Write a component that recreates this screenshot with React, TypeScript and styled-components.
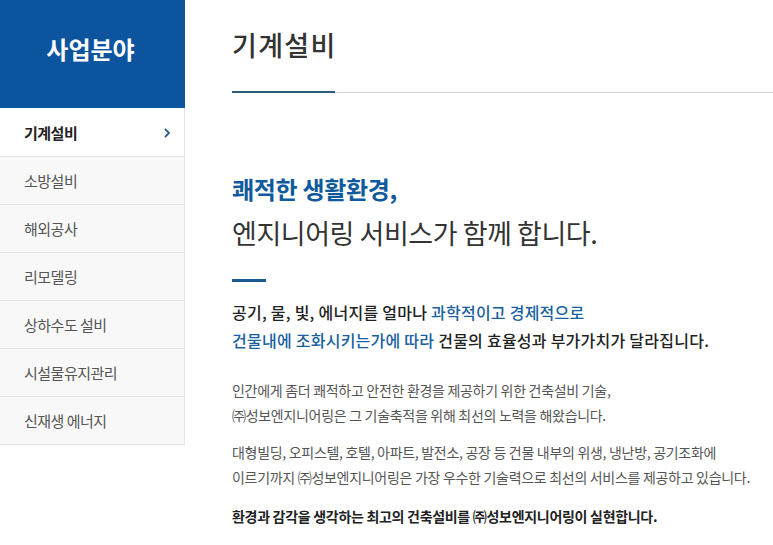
import React from "react";
import styled, { createGlobalStyle } from "styled-components";

const Global = createGlobalStyle`
  html, body { margin: 0; padding: 0; background: #fff; }
  body { font-family: "Noto Sans CJK KR", "Noto Sans", sans-serif; color: #333; }
  * { box-sizing: border-box; }
`;

const Page = styled.div`
  display: flex;
  width: 773px;
  height: 545px;
  overflow: hidden;
`;

const Sidebar = styled.aside`
  width: 185px;
  flex: none;
  display: flex;
  flex-direction: column;
`;

const SideHeader = styled.div`
  height: 108px;
  background: #0d549f;
  color: #fff;
  display: flex;
  align-items: center;
  justify-content: center;
  font-size: 24px;
  font-weight: 700;
  padding: 0 4px 12px 0;
`;

const Menu = styled.ul`
  list-style: none;
  margin: 0;
  padding: 1px 0 0;
  border-right: 1px solid #e6e6e6;
`;

const MenuItem = styled.li<{ $active?: boolean }>`
  height: 48px;
  display: flex;
  align-items: center;
  justify-content: space-between;
  padding: 0 12px 0 24px;
  background: ${(p) => (p.$active ? "#fff" : "#f8f8f8")};
  border-bottom: 1px solid #e4e4e4;
  font-size: 15px;
  letter-spacing: -0.5px;
  font-weight: ${(p) => (p.$active ? 700 : 400)};
  color: ${(p) => (p.$active ? "#222" : "#555")};
`;

const Chevron = styled.svg`
  width: 10px;
  height: 12px;
`;

const Main = styled.main`
  flex: 1;
  padding-left: 47px;
  display: flex;
  flex-direction: column;
`;

const Title = styled.h1`
  margin: 0;
  height: 91px;
  display: flex;
  align-items: center;
  padding-bottom: 2px;
  font-size: 27px;
  font-weight: 500;
  color: #333;
  letter-spacing: 1.3px;
`;

const Rule = styled.div`
  display: flex;
  align-items: flex-end;
  height: 2px;
`;

const RuleAccent = styled.div`
  width: 103px;
  height: 2px;
  background: #2b5a7c;
`;

const RuleRest = styled.div`
  flex: 1;
  height: 1px;
  background: #cfcfcf;
`;

const Headline = styled.h2`
  margin: 74px 0 0;
  font-weight: 400;
  line-height: 44px;
`;

const HeadStrong = styled.span`
  display: block;
  font-size: 24px;
  font-weight: 700;
  color: #0f5a9c;
  letter-spacing: -0.3px;
`;

const HeadLight = styled.span`
  display: block;
  font-size: 27px;
  font-weight: 400;
  color: #333;
  letter-spacing: -0.45px;
`;

const Bar = styled.div`
  width: 34px;
  height: 3px;
  background: #1c5c92;
  margin-top: 24px;
`;

const Lead = styled.p`
  margin: 16px 0 0;
  font-size: 16px;
  line-height: 28px;
  font-weight: 500;
  color: #222;
  letter-spacing: 0.25px;
`;

const Blue = styled.span`
  color: #1a5f9f;
`;

const Body = styled.p<{ $strong?: boolean }>`
  margin: ${(p) => (p.$strong ? "14px" : "12px")} 0 0;
  font-size: 14px;
  line-height: 25px;
  font-weight: ${(p) => (p.$strong ? 700 : 400)};
  color: ${(p) => (p.$strong ? "#222" : "#555")};
  letter-spacing: -0.3px;
`;

const FirstBody = styled(Body)`
  margin-top: 24px;
`;

const items = ["기계설비", "소방설비", "해외공사", "리모델링", "상하수도 설비", "시설물유지관리", "신재생 에너지"];

export default function App() {
  return (
    <>
      <Global />
      <Page>
        <Sidebar>
          <SideHeader>사업분야</SideHeader>
          <Menu>
            {items.map((t, i) => (
              <MenuItem key={t} $active={i === 0}>
                {t}
                {i === 0 && (
                  <Chevron viewBox="0 0 10 12">
                    <path d="M3 2 L7 6 L3 10" fill="none" stroke="#2d5c86" strokeWidth="1.8" />
                  </Chevron>
                )}
              </MenuItem>
            ))}
          </Menu>
        </Sidebar>
        <Main>
          <Title>기계설비</Title>
          <Rule>
            <RuleAccent />
            <RuleRest />
          </Rule>
          <Headline>
            <HeadStrong>쾌적한 생활환경,</HeadStrong>
            <HeadLight>엔지니어링 서비스가 함께 합니다.</HeadLight>
          </Headline>
          <Bar />
          <Lead>
            공기, 물, 빛, 에너지를 얼마나 <Blue>과학적이고 경제적으로</Blue>
            <br />
            <Blue>건물내에 조화시키는가에 따라</Blue> 건물의 효율성과 부가가치가 달라집니다.
          </Lead>
          <FirstBody>
            인간에게 좀더 쾌적하고 안전한 환경을 제공하기 위한 건축설비 기술,
            <br />
            ㈜성보엔지니어링은 그 기술축적을 위해 최선의 노력을 해왔습니다.
          </FirstBody>
          <Body>
            대형빌딩, 오피스텔, 호텔, 아파트, 발전소, 공장 등 건물 내부의 위생, 냉난방, 공기조화에
            <br />
            이르기까지 ㈜성보엔지니어링은 가장 우수한 기술력으로 최선의 서비스를 제공하고 있습니다.
          </Body>
          <Body $strong>환경과 감각을 생각하는 최고의 건축설비를 ㈜성보엔지니어링이 실현합니다.</Body>
        </Main>
      </Page>
    </>
  );
}
